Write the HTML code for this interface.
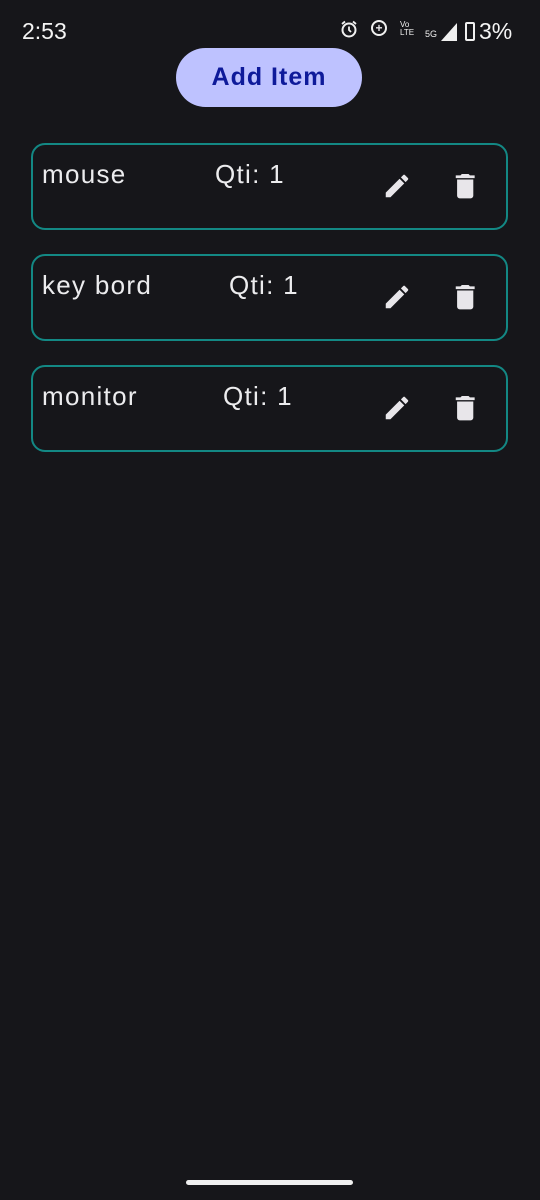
<!DOCTYPE html>
<html><head><meta charset="utf-8"><style>
html,body{margin:0;padding:0;background:#16161a;width:540px;height:1200px;overflow:hidden;font-family:"Liberation Sans",sans-serif;color:#e8e6ea}
.abs{position:absolute}
.time{left:22px;top:18px;font-size:23px;color:#f4f4f4}
.btn{left:176px;top:48px;width:186px;height:59px;border-radius:30px;background:#bec2ff;color:#0e1a9a;font-weight:bold;font-size:25px;letter-spacing:1px;text-align:center;line-height:59px}
.card{left:31px;width:473px;height:83px;border:2.5px solid #138884;border-radius:14px}
.t{font-size:26px;color:#ececee;letter-spacing:1.3px}
.bar{left:186px;top:1180px;width:167px;height:5px;border-radius:3px;background:#f0f0f0}
</style></head><body>
<div class="abs time">2:53</div>
<svg class="abs" style="left:340px;top:20px" width="18" height="18"><circle cx="9" cy="10" r="6.5" fill="none" stroke="#f0f0f0" stroke-width="2"/><path d="M9 6.5V10l2 2M2 4l3-2.5M16 4l-3-2.5" stroke="#f0f0f0" stroke-width="1.8" fill="none"/></svg>
<div class="abs" style="left:371px;top:20px;width:16px;height:16px;border:2px solid #f0f0f0;border-radius:50%;box-sizing:border-box;font-size:12px;line-height:12px;text-align:center;font-weight:bold">+</div>
<div class="abs" style="left:400px;top:21px;font-size:8px;line-height:8px;color:#f0f0f0">Vo<br>LTE</div>
<div class="abs" style="left:425px;top:29px;font-size:9px;color:#f0f0f0">5G</div>
<svg class="abs" style="left:440px;top:22px" width="18" height="20"><path d="M17 1 L17 19 L1 19 Z" fill="#f0f0f0"/></svg>
<div class="abs" style="left:465px;top:22px;width:10px;height:19px;border:2px solid #f0f0f0;box-sizing:border-box;border-radius:2px"></div>
<div class="abs" style="left:479px;top:18px;font-size:23px;color:#f4f4f4">3%</div>
<div class="abs btn">Add Item</div>

<div class="abs card" style="top:143px"></div>
<div class="abs t" style="left:42px;top:159px">mouse</div>
<div class="abs t" style="left:215px;top:159px">Qti: 1</div>
<div class="abs card" style="top:254px"></div>
<div class="abs t" style="left:42px;top:270px">key bord</div>
<div class="abs t" style="left:229px;top:270px">Qti: 1</div>
<div class="abs card" style="top:365px"></div>
<div class="abs t" style="left:42px;top:381px">monitor</div>
<div class="abs t" style="left:223px;top:381px">Qti: 1</div>

<svg class="abs" style="left:0;top:0" width="540" height="500">
<defs>
<g id="pen"><path d="M3 17.25V21h3.75L17.81 9.94l-3.75-3.75L3 17.25zM20.71 7.04a1 1 0 000-1.41l-2.34-2.34a1 1 0 00-1.41 0l-1.83 1.83 3.75 3.75 1.83-1.83z" fill="#e8e6ea"/></g>
<g id="bin"><path d="M6 19c0 1.1.9 2 2 2h8c1.1 0 2-.9 2-2V7H6v12zM19 4h-3.5l-1-1h-5l-1 1H5v2h14V4z" fill="#e8e6ea"/></g>
</defs>
<use href="#pen" transform="translate(382,171) scale(1.25)"/>
<use href="#bin" transform="translate(449,170) scale(1.35)"/>
<use href="#pen" transform="translate(382,282) scale(1.25)"/>
<use href="#bin" transform="translate(449,281) scale(1.35)"/>
<use href="#pen" transform="translate(382,393) scale(1.25)"/>
<use href="#bin" transform="translate(449,392) scale(1.35)"/>
</svg>
<div class="abs bar"></div>
</body></html>
